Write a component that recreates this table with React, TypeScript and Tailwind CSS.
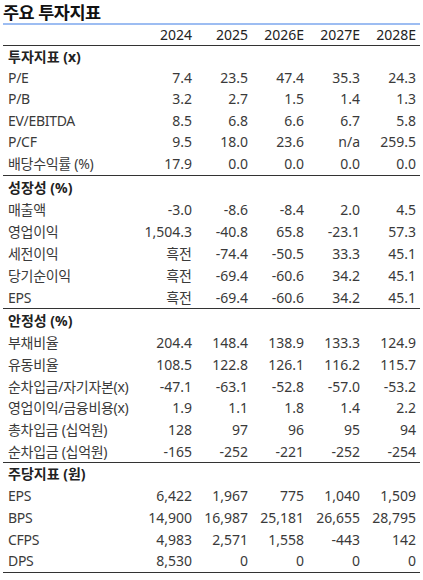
import React from 'react';

type Row = { label: string; values: string[] };
type Section = { title: string; head: string; row: string; rows: Row[] };

const years = ['2024', '2025', '2026E', '2027E', '2028E'];

const sections: Section[] = [
  {
    title: '투자지표 (x)',
    head: 'h-[21px]',
    row: 'h-[21.5px]',
    rows: [
      { label: 'P/E', values: ['7.4', '23.5', '47.4', '35.3', '24.3'] },
      { label: 'P/B', values: ['3.2', '2.7', '1.5', '1.4', '1.3'] },
      { label: 'EV/EBITDA', values: ['8.5', '6.8', '6.6', '6.7', '5.8'] },
      { label: 'P/CF', values: ['9.5', '18.0', '23.6', 'n/a', '259.5'] },
      { label: '배당수익률 (%)', values: ['17.9', '0.0', '0.0', '0.0', '0.0'] },
    ],
  },
  {
    title: '성장성 (%)',
    head: 'h-[24px]',
    row: 'h-[21.8px]',
    rows: [
      { label: '매출액', values: ['-3.0', '-8.6', '-8.4', '2.0', '4.5'] },
      { label: '영업이익', values: ['1,504.3', '-40.8', '65.8', '-23.1', '57.3'] },
      { label: '세전이익', values: ['흑전', '-74.4', '-50.5', '33.3', '45.1'] },
      { label: '당기순이익', values: ['흑전', '-69.4', '-60.6', '34.2', '45.1'] },
      { label: 'EPS', values: ['흑전', '-69.4', '-60.6', '34.2', '45.1'] },
    ],
  },
  {
    title: '안정성 (%)',
    head: 'h-[23px]',
    row: 'h-[21.65px]',
    rows: [
      { label: '부채비율', values: ['204.4', '148.4', '138.9', '133.3', '124.9'] },
      { label: '유동비율', values: ['108.5', '122.8', '126.1', '116.2', '115.7'] },
      { label: '순차입금/자기자본(x)', values: ['-47.1', '-63.1', '-52.8', '-57.0', '-53.2'] },
      { label: '영업이익/금융비용(x)', values: ['1.9', '1.1', '1.8', '1.4', '2.2'] },
      { label: '총차입금 (십억원)', values: ['128', '97', '96', '95', '94'] },
      { label: '순차입금 (십억원)', values: ['-165', '-252', '-221', '-252', '-254'] },
    ],
  },
  {
    title: '주당지표 (원)',
    head: 'h-[22px]',
    row: 'h-[21.75px]',
    rows: [
      { label: 'EPS', values: ['6,422', '1,967', '775', '1,040', '1,509'] },
      { label: 'BPS', values: ['14,900', '16,987', '25,181', '26,655', '28,795'] },
      { label: 'CFPS', values: ['4,983', '2,571', '1,558', '-443', '142'] },
      { label: 'DPS', values: ['8,530', '0', '0', '0', '0'] },
    ],
  },
];

const font = { fontFamily: '"Noto Sans", "Noto Sans CJK KR", sans-serif' };

function DataRow({ row, h }: { row: Row; h: string }) {
  return (
    <div className={`grid grid-cols-[133px_56px_56px_56px_56px_56px] items-center ${h}`}>
      <span className="pl-[5px] whitespace-nowrap tracking-[-0.3px]">{row.label}</span>
      {row.values.map((v, i) => (
        <span key={i} className="text-right">{v}</span>
      ))}
    </div>
  );
}

export default function App() {
  return (
    <div className="w-[423px] h-[580px] bg-white text-[#3a3a3a] text-[14px] leading-none overflow-hidden" style={font}>
      <h1 className="pl-[3px] pt-[2px] h-[23px] text-[17.5px] tracking-[-0.5px] font-bold text-[#111] flex items-center">주요 투자지표</h1>
      <div className="ml-[3px] w-[417px] h-[2px] bg-[#9dbdf2]" />

      <div className="ml-[3px] w-[417px]">
        {/* column header */}
        <div className="grid grid-cols-[133px_56px_56px_56px_56px_56px] h-[21px] items-center border-b border-[#333] text-[#222]">
          <span />
          {years.map((y) => (
            <span key={y} className="text-right">{y}</span>
          ))}
        </div>

        {sections.map((s) => (
          <div key={s.title} className="border-b border-[#333]">
            <div className={`flex items-center pl-[5px] font-bold text-[#222] ${s.head}`}>{s.title}</div>
            {s.rows.map((r, i) => (
              <DataRow key={i} row={r} h={s.row} />
            ))}
          </div>
        ))}
      </div>
    </div>
  );
}
